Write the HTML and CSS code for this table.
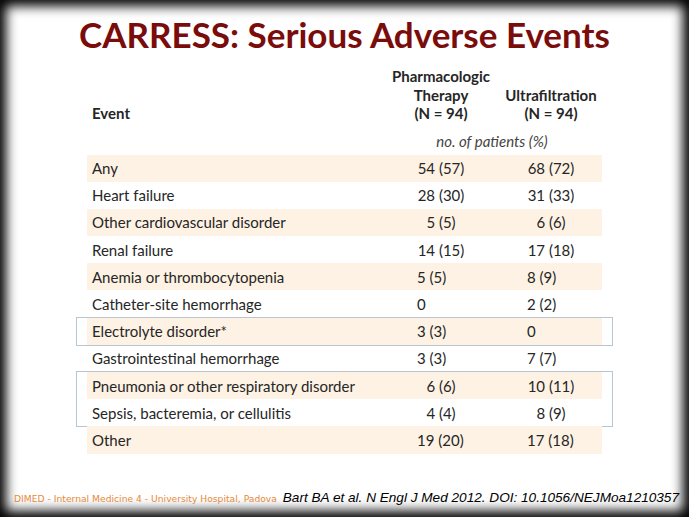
FILE: index.html
```html
<!DOCTYPE html>
<html>
<head>
<meta charset="utf-8">
<link rel="stylesheet" href="styles.css">
</head>
<body>
<div class="slide">
  <h1 class="title">CARRESS: Serious Adverse Events</h1>
  <div class="table">
    <div class="head">
      <div class="h-event">Event</div>
      <div class="h-col">Pharmacologic<br>Therapy<br>(N = 94)</div>
      <div class="h-col">Ultrafiltration<br>(N = 94)</div>
    </div>
    <div class="unit">no. of patients (%)</div>
    <div class="row alt"><span class="ev">Any</span><span class="c1">54 (57)</span><span class="c2">68 (72)</span></div>
    <div class="row"><span class="ev">Heart failure</span><span class="c1">28 (30)</span><span class="c2">31 (33)</span></div>
    <div class="row alt"><span class="ev">Other cardiovascular disorder</span><span class="c1">5 (5)</span><span class="c2">6 (6)</span></div>
    <div class="row"><span class="ev">Renal failure</span><span class="c1">14 (15)</span><span class="c2">17 (18)</span></div>
    <div class="row alt left"><span class="ev">Anemia or thrombocytopenia</span><span class="c1">5 (5)</span><span class="c2">8 (9)</span></div>
    <div class="row left"><span class="ev">Catheter-site hemorrhage</span><span class="c1">0</span><span class="c2">2 (2)</span></div>
    <div class="box">
      <div class="row alt left"><span class="ev">Electrolyte disorder*</span><span class="c1">3 (3)</span><span class="c2">0</span></div>
    </div>
    <div class="row left"><span class="ev">Gastrointestinal hemorrhage</span><span class="c1">3 (3)</span><span class="c2">7 (7)</span></div>
    <div class="box">
      <div class="row alt"><span class="ev">Pneumonia or other respiratory disorder</span><span class="c1">6 (6)</span><span class="c2">10 (11)</span></div>
      <div class="row"><span class="ev">Sepsis, bacteremia, or cellulitis</span><span class="c1">4 (4)</span><span class="c2">8 (9)</span></div>
    </div>
    <div class="row alt left"><span class="ev">Other</span><span class="c1">19 (20)</span><span class="c2">17 (18)</span></div>
  </div>
  <div class="footer">
    <span class="dimed">DIMED - Internal Medicine 4 - University Hospital, Padova</span>
    <span class="ref">Bart BA et al. N Engl J Med 2012. DOI: 10.1056/NEJMoa1210357</span>
  </div>
</div>
</body>
</html>
```
FILE: styles.css
```css
html, body {
  margin: 0;
  padding: 0;
  background: #000;
}
.slide {
  width: 689px;
  height: 517px;
  background: #fff;
  box-shadow: inset 0 0 12px 6px #000;
  display: flex;
  flex-direction: column;
  box-sizing: border-box;
  padding-top: 13px;
}
.title {
  margin: 0;
  font-family: Lato, "Liberation Sans", sans-serif;
  font-weight: 700;
  font-size: 35px;
  line-height: 42px;
  color: #7a0c0c;
  text-align: center;
  padding-left: 0;
}
.table {
  margin-left: 87px;
  width: 515px;
  margin-top: 12px;
  font-family: Lato, "Liberation Sans", sans-serif;
  font-size: 15px;
  color: #262626;
}
.head {
  display: grid;
  grid-template-columns: 295px 118px 102px;
  align-items: end;
  font-weight: 700;
  line-height: 18.5px;
}
.h-event {
  padding-left: 5px;
}
.h-col {
  text-align: center;
}
.unit {
  font-style: italic;
  color: #444;
  margin-left: 295px;
  text-align: center;
  line-height: 18px;
  padding: 9px 0 5px;
}
.row {
  display: grid;
  grid-template-columns: 295px 118px 102px;
  height: 27.2px;
  align-items: center;
}
.row.alt {
  background: #fdf2e4;
}
.ev {
  padding-left: 5px;
}
.c1, .c2 {
  text-align: center;
}
.row.left .c1 {
  text-align: left;
  padding-left: 35px;
}
.row.left .c2 {
  text-align: left;
  padding-left: 27px;
}
.box {
  margin: -1px -11px;
  padding: 0 10px;
  border: 1px solid #b9c5d3;
}
.footer {
  margin-top: auto;
  display: flex;
  align-items: baseline;
  padding: 0 10px 12px 14px;
}
.dimed {
  font-family: "DejaVu Sans", sans-serif;
  font-size: 9.2px;
  color: #e8893a;
  letter-spacing: 0;
}
.ref {
  margin-left: auto;
  font-family: "Liberation Sans", Arial, sans-serif;
  font-style: italic;
  font-size: 13.6px;
  color: #000;
}
```
